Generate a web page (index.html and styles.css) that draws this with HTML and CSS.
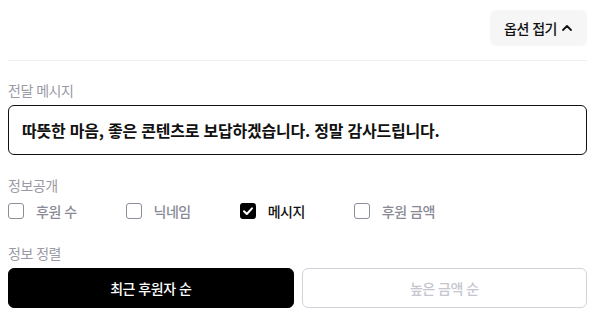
FILE: index.html
```html
<!DOCTYPE html>
<html lang="ko">
<head>
    <meta charset="UTF-8">
    <meta name="viewport" content="width=device-width, initial-scale=1.0">
    <title>후원 옵션</title>
    <link rel="stylesheet" href="styles.css">
</head>
<body>
    <div class="top">
        <button class="fold-btn">
            옵션 접기
            <svg width="12" height="12" viewBox="0 0 12 12"><path d="M2 8 L6 4 L10 8" fill="none" stroke="#111" stroke-width="1.8" stroke-linecap="round" stroke-linejoin="round"/></svg>
        </button>
    </div>
    <hr class="divider">

    <div class="label first">전달 메시지</div>
    <input type="text" class="message" value="따뜻한 마음, 좋은 콘텐츠로 보답하겠습니다. 정말 감사드립니다.">

    <div class="label">정보공개</div>
    <div class="checks">
        <label class="check"><span class="box"></span>후원 수</label>
        <label class="check"><span class="box"></span>닉네임</label>
        <label class="check on"><span class="box">
            <svg width="16" height="16" viewBox="0 0 16 16"><path d="M4 8.2 L6.8 11 L12 5.3" fill="none" stroke="#fff" stroke-width="2" stroke-linecap="round" stroke-linejoin="round"/></svg>
        </span>메시지</label>
        <label class="check"><span class="box"></span>후원 금액</label>
    </div>

    <div class="label sort">정보 정렬</div>
    <div class="sort-btns">
        <button class="sort-btn active">최근 후원자 순</button>
        <button class="sort-btn">높은 금액 순</button>
    </div>
</body>
</html>
```

FILE: styles.css
```css
body {
    font-family: "Noto Sans CJK KR", "Noto Sans", sans-serif;
    margin: 8px;
    color: #111;
    letter-spacing: -0.5px;
}
button, input {
    font-family: inherit;
    letter-spacing: inherit;
}
.top {
    display: flex;
    justify-content: flex-end;
    padding-top: 2px;
}
.fold-btn {
    display: flex;
    align-items: center;
    gap: 4px;
    height: 36px;
    width: 97px;
    justify-content: center;
    background-color: #f6f6f7;
    border: none;
    border-radius: 6px;
    font-size: 14px;
    font-weight: 500;
    color: #111;
}
.divider {
    border: none;
    border-top: 1px solid #efeff1;
    margin: 14px 0 0 0;
}
.label {
    font-size: 14px;
    line-height: 20px;
    color: #9a9aa6;
    margin-top: 20px;
}
.label.first {
    margin-top: 19px;
}
.label.sort {
    margin-top: 22px;
}
.message {
    display: block;
    width: 100%;
    box-sizing: border-box;
    height: 50px;
    margin-top: 5px;
    padding: 0 13px;
    border: 1px solid #111;
    border-radius: 6px;
    font-size: 16px;
    font-weight: 700;
    letter-spacing: -0.22px;
    color: #111;
    outline: none;
}
.checks {
    display: flex;
    gap: 49px;
    margin-top: 6px;
    height: 20px;
    align-items: center;
}
.check {
    display: flex;
    align-items: center;
    gap: 12px;
    font-size: 14px;
    font-weight: 500;
    color: #8a8a96;
}
.check.on {
    color: #111;
}
.box {
    width: 16px;
    height: 16px;
    box-sizing: border-box;
    border: 1.5px solid #8e8e9a;
    border-radius: 3px;
    display: flex;
}
.check.on .box {
    border: none;
    background-color: #000;
}
.sort-btns {
    display: flex;
    gap: 8px;
    margin-top: 5px;
}
.sort-btn {
    flex: 1;
    height: 40px;
    border-radius: 6px;
    font-size: 14px;
    font-weight: 500;
    background-color: #fff;
    border: 1px solid #d2d2da;
    color: #c6c6d0;
}
.sort-btn.active {
    background-color: #000;
    border-color: #000;
    color: #fff;
}
```
